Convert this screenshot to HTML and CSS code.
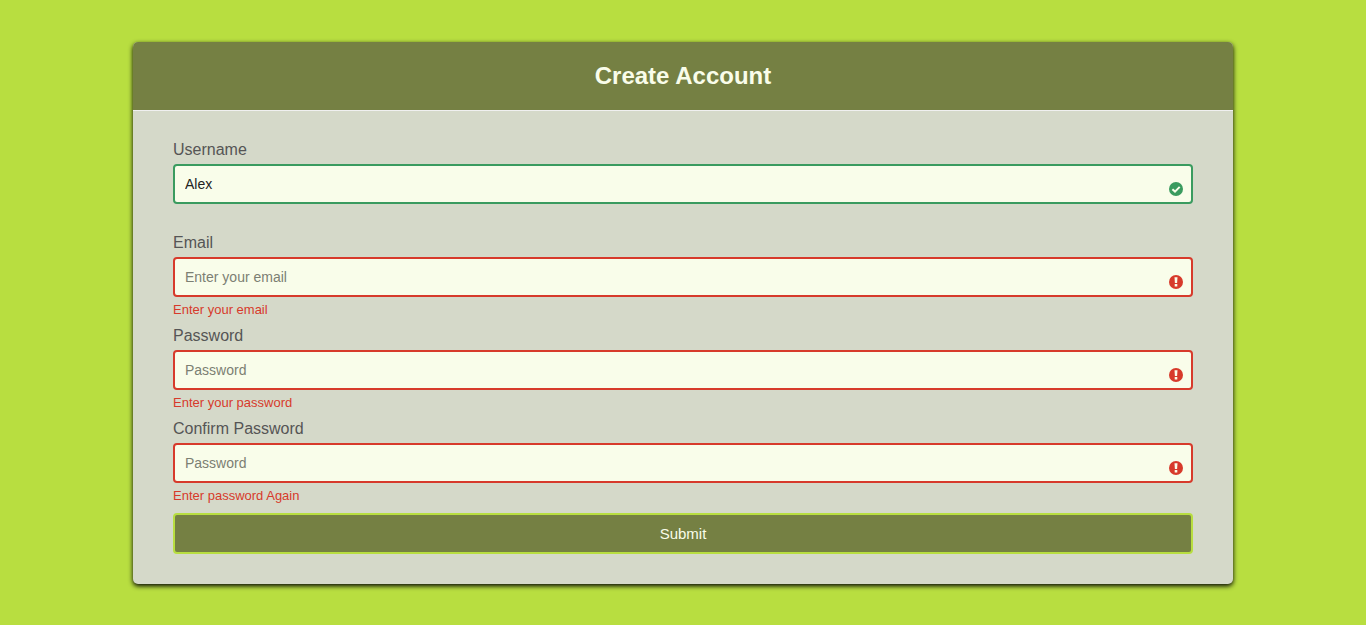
FILE: index.html
```html
<!DOCTYPE html>
<html lang="en">
<head>
<meta charset="utf-8">
<title>Create Account</title>
<link rel="stylesheet" href="styles.css">
</head>
<body>
<main class="container">
  <header class="header"><h1>Create Account</h1></header>
  <form class="form" novalidate>
    <div class="form-control success">
      <label for="username">Username</label>
      <div class="field">
        <input type="text" id="username" value="Alex" placeholder="Enter your username">
        <svg class="icon" viewBox="0 0 14 14" aria-hidden="true"><circle cx="7" cy="7" r="7"/><path class="tick" d="M3.4 7.2 6 9.6l4.7-4.7"/></svg>
      </div>
      <small></small>
    </div>
    <div class="form-control error">
      <label for="email">Email</label>
      <div class="field">
        <input type="email" id="email" placeholder="Enter your email">
        <svg class="icon" viewBox="0 0 14 14" aria-hidden="true"><circle cx="7" cy="7" r="7"/><path class="mark" d="M5.5 2.2h3L8.1 8H5.9zM5.7 9h2.6v2.4H5.7z"/></svg>
      </div>
      <small>Enter your email</small>
    </div>
    <div class="form-control error">
      <label for="password">Password</label>
      <div class="field">
        <input type="password" id="password" placeholder="Password">
        <svg class="icon" viewBox="0 0 14 14" aria-hidden="true"><circle cx="7" cy="7" r="7"/><path class="mark" d="M5.5 2.2h3L8.1 8H5.9zM5.7 9h2.6v2.4H5.7z"/></svg>
      </div>
      <small>Enter your password</small>
    </div>
    <div class="form-control error">
      <label for="confirm">Confirm Password</label>
      <div class="field">
        <input type="password" id="confirm" placeholder="Password">
        <svg class="icon" viewBox="0 0 14 14" aria-hidden="true"><circle cx="7" cy="7" r="7"/><path class="mark" d="M5.5 2.2h3L8.1 8H5.9zM5.7 9h2.6v2.4H5.7z"/></svg>
      </div>
      <small>Enter password Again</small>
    </div>
    <button type="submit">Submit</button>
  </form>
</main>
</body>
</html>
```
FILE: styles.css
```css
* { box-sizing: border-box; }

body {
  margin: 0;
  min-height: 100vh;
  display: flex;
  align-items: center;
  justify-content: center;
  background: #b8de40;
  font-family: "Liberation Sans", Arial, sans-serif;
}

.container {
  width: 100%;
  max-width: 1100px;
  overflow: hidden;
  border-radius: 5px;
  background: #d5d9c9;
  box-shadow: 0 2px 5px #000;
}

.header {
  padding: 20px 40px;
  border-bottom: 1px solid #f0f0f0;
  background: #758043;
  color: #f9fdea;
  text-align: center;
}

.header h1 {
  margin: 0;
  font-size: 24px;
  line-height: 28px;
}

.form { padding: 30px 40px; }

.form-control {
  display: flex;
  flex-direction: column;
  padding-bottom: 8px;
}

.form-control label {
  margin-bottom: 5px;
  color: #555;
  font-size: 16px;
  line-height: 18px;
}

.field { position: relative; }

.field input {
  display: block;
  width: 100%;
  height: 40px;
  padding: 10px;
  border: 2px solid #ccc;
  border-radius: 4px;
  outline: 0;
  background: #f9fdea;
  color: #222;
  font-family: inherit;
  font-size: 14px;
}

.field input::placeholder { color: #7c7f73; }

.icon {
  position: absolute;
  right: 10px;
  bottom: 8px;
  width: 14px;
  height: 14px;
}

.tick {
  fill: none;
  stroke: #f9fdea;
  stroke-width: 2;
}

.mark { fill: #f9fdea; }

.success input { border-color: #3a9b5f; }
.success circle { fill: #3a9b5f; }
.error input { border-color: #d73a2b; }
.error circle { fill: #d73a2b; }

.form-control small {
  min-height: 22px;
  padding-top: 4px;
  color: #d73a2b;
  font-size: 13px;
  line-height: 18px;
}

button {
  display: block;
  width: 100%;
  height: 41px;
  border: 2px solid #b8de40;
  border-radius: 4px;
  background: #758043;
  color: #f9fdea;
  font-family: inherit;
  font-size: 15px;
}
```
